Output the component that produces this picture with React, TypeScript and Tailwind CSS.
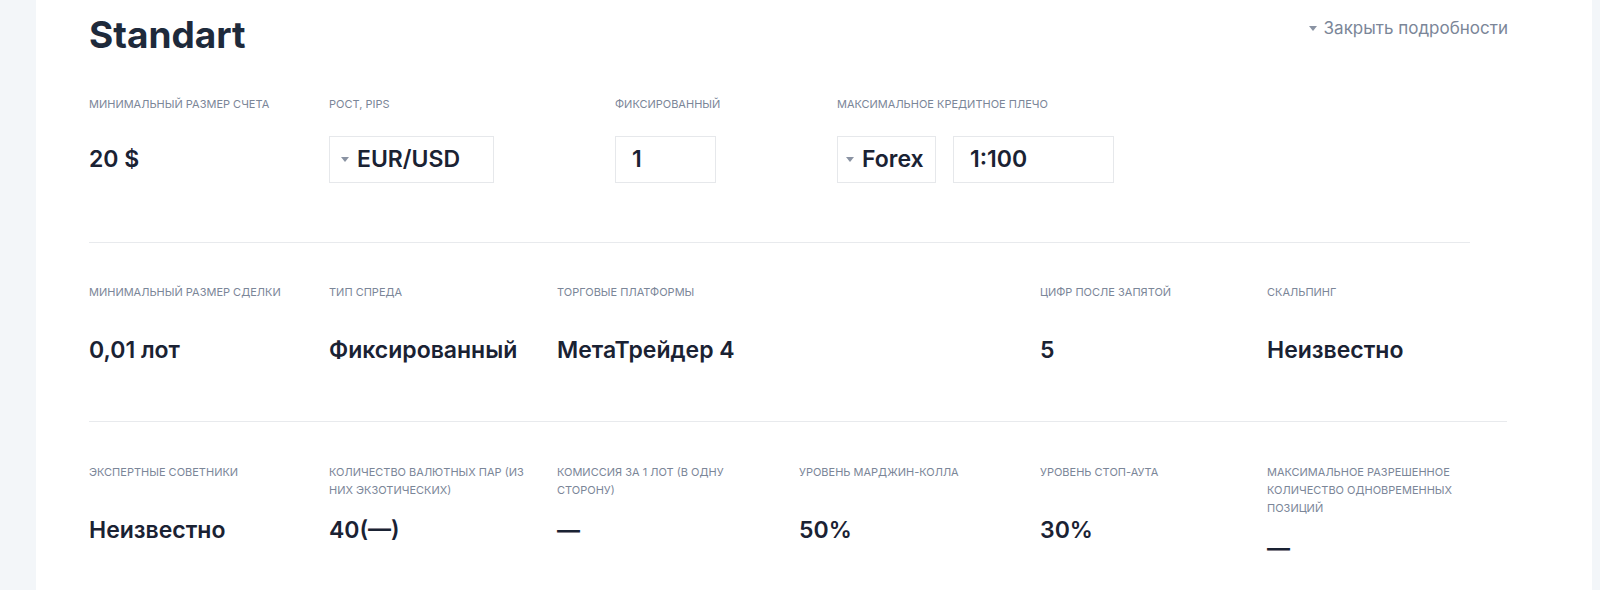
import React from "react";

const Label = ({ children }: { children: React.ReactNode }) => (
  <div className="min-h-[36px] text-[11px] leading-[18px] uppercase text-[#7b8698]">
    {children}
  </div>
);

const Value = ({ children }: { children: React.ReactNode }) => (
  <div className="mt-[17px] text-[23px] leading-[28px] font-semibold text-[#1a2233]">
    {children}
  </div>
);

const Caret = () => (
  <span className="inline-block w-0 h-0 border-l-[4px] border-r-[4px] border-t-[5px] border-l-transparent border-r-transparent border-t-[#8a93a3]" />
);

const Cell = ({
  label,
  value,
  className = "",
}: {
  label: React.ReactNode;
  value: React.ReactNode;
  className?: string;
}) => (
  <div className={className}>
    <Label>{label}</Label>
    <Value>{value}</Value>
  </div>
);

const App = () => {
  return (
    <div
      className="w-[1600px] h-[590px] bg-[#f3f6f9] flex overflow-hidden"
      style={{ fontFamily: "Inter, 'Noto Sans', sans-serif" }}
    >
      <div className="ml-[36px] w-[1556px] h-full bg-white pl-[53px] pt-[14px]">
        <div className="flex items-start justify-between pr-[84px]">
          <h1 className="text-[37px] leading-[42px] font-bold text-[#1e2a3b]">
            Standart
          </h1>
          <button className="mt-[3px] flex items-center gap-[7px] text-[17px] leading-[22px] text-[#7b8698]">
            <Caret />
            Закрыть подробности
          </button>
        </div>

        {/* row 1 */}
        <div className="flex mt-[39px]">
          <div className="w-[240px]">
            <Label>Минимальный размер счета</Label>
            <div className="h-[47px] mt-[5px] flex items-center text-[23px] font-semibold text-[#1a2233]">
              20 $
            </div>
          </div>
          <div className="w-[286px]">
            <Label>Рост, pips</Label>
            <div className="mt-[5px] w-[165px] h-[47px] border border-[#e6e8eb] flex items-center pl-[11px] gap-[8px] text-[23px] font-semibold text-[#1a2233]">
              <Caret />
              EUR/USD
            </div>
          </div>
          <div className="w-[222px]">
            <Label>Фиксированный</Label>
            <div className="mt-[5px] w-[101px] h-[47px] border border-[#e6e8eb] flex items-center pl-[16px] text-[23px] font-semibold text-[#1a2233]">
              1
            </div>
          </div>
          <div>
            <Label>Максимальное кредитное плечо</Label>
            <div className="mt-[5px] flex gap-[17px]">
              <div className="w-[99px] h-[47px] border border-[#e6e8eb] flex items-center pl-[8px] gap-[8px] text-[23px] font-semibold text-[#1a2233]">
                <Caret />
                Forex
              </div>
              <div className="w-[161px] h-[47px] border border-[#e6e8eb] flex items-center pl-[16px] text-[23px] font-semibold text-[#1a2233]">
                1:100
              </div>
            </div>
          </div>
        </div>

        <div className="mt-[59px] w-[1381px] border-t border-[#e8eaed]" />

        {/* row 2 */}
        <div className="grid grid-cols-[240px_228px_242px_241px_227px_240px] mt-[40px]">
          <Cell label="Минимальный размер сделки" value="0,01 лот" />
          <Cell label="Тип спреда" value="Фиксированный" />
          <Cell label="Торговые платформы" value="МетаТрейдер 4" className="col-span-2" />
          <Cell label="Цифр после запятой" value="5" />
          <Cell label="Скальпинг" value="Неизвестно" />
        </div>

        <div className="mt-[57px] w-[1418px] border-t border-[#e8eaed]" />

        {/* row 3 */}
        <div className="grid grid-cols-[240px_228px_242px_241px_227px_240px] mt-[41px]">
          <Cell label="Экспертные советники" value="Неизвестно" />
          <Cell
            label={
              <>
                Количество валютных пар (из
                <br />
                них экзотических)
              </>
            }
            value="40(—)"
          />
          <Cell
            label={
              <>
                Комиссия за 1 лот (в одну
                <br />
                сторону)
              </>
            }
            value="—"
          />
          <Cell label="Уровень марджин-колла" value="50%" />
          <Cell label="Уровень стоп-аута" value="30%" />
          <Cell
            label={
              <>
                Максимальное разрешенное
                <br />
                количество одновременных
                <br />
                позиций
              </>
            }
            value="—"
          />
        </div>
      </div>
    </div>
  );
};

export default App;
